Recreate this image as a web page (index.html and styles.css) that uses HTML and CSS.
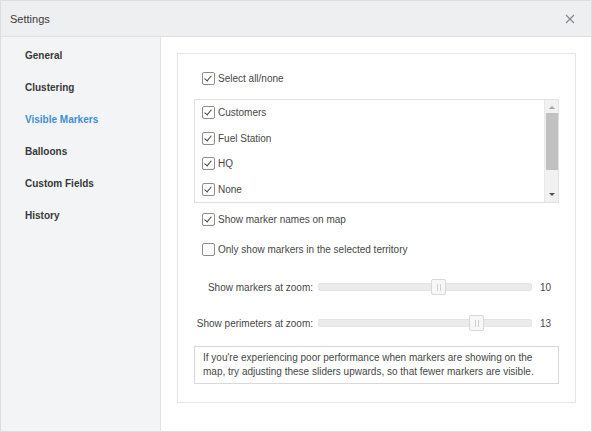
FILE: index.html
```html
<!DOCTYPE html>
<html lang="en">
<head>
    <meta charset="UTF-8">
    <title>Settings</title>
    <link rel="stylesheet" href="styles.css">
</head>
<body>
    <div class="dialog">
        <div class="dialog-header">
            <span class="dialog-title">Settings</span>
            <button class="close-btn" aria-label="Close">
                <svg width="10" height="10" viewBox="0 0 10 10"><path d="M1 1 L9 9 M9 1 L1 9" stroke="#80858f" stroke-width="1.1" fill="none"/></svg>
            </button>
        </div>
        <div class="dialog-body">
            <ul class="sidebar">
                <li>General</li>
                <li>Clustering</li>
                <li class="active">Visible Markers</li>
                <li>Balloons</li>
                <li>Custom Fields</li>
                <li>History</li>
            </ul>
            <div class="content">
                <div class="panel">
                    <label class="check-row"><span class="checkbox checked"></span>Select all/none</label>

                    <div class="marker-list">
                        <div class="marker-items">
                            <label class="check-row item"><span class="checkbox checked"></span>Customers</label>
                            <label class="check-row item"><span class="checkbox checked"></span>Fuel Station</label>
                            <label class="check-row item"><span class="checkbox checked"></span>HQ</label>
                            <label class="check-row item"><span class="checkbox checked"></span>None</label>
                        </div>
                        <div class="scrollbar">
                            <span class="arrow up"></span>
                            <span class="thumb"></span>
                            <span class="arrow down"></span>
                        </div>
                    </div>

                    <label class="check-row option"><span class="checkbox checked"></span>Show marker names on map</label>
                    <label class="check-row option"><span class="checkbox"></span>Only show markers in the selected territory</label>

                    <div class="slider-row first">
                        <span class="slider-label">Show markers at zoom:</span>
                        <div class="slider-track"><span class="slider-thumb" style="left: 112px"></span></div>
                        <span class="slider-value">10</span>
                    </div>
                    <div class="slider-row">
                        <span class="slider-label">Show perimeters at zoom:</span>
                        <div class="slider-track"><span class="slider-thumb" style="left: 150px"></span></div>
                        <span class="slider-value">13</span>
                    </div>

                    <div class="info-box">
                        If you're experiencing poor performance when markers are showing on the map, try adjusting these sliders upwards, so that fewer markers are visible.
                    </div>
                </div>
            </div>
        </div>
    </div>
</body>
</html>
```

FILE: styles.css
```css
* {
    margin: 0;
    padding: 0;
    box-sizing: border-box;
    font-family: 'Liberation Sans', Arial, sans-serif;
}

body {
    background: #ffffff;
}

.dialog {
    width: 592px;
    height: 432px;
    border: 1px solid #dcdde0;
    display: flex;
    flex-direction: column;
    background: white;
}

.dialog-header {
    height: 36px;
    flex-shrink: 0;
    background: #eeeff1;
    border-bottom: 1px solid #dfe0e3;
    display: flex;
    align-items: center;
    justify-content: space-between;
    padding: 0 16px 0 9px;
}

.dialog-title {
    font-size: 11px;
    color: #3a3a3a;
}

.close-btn {
    background: none;
    border: none;
    width: 10px;
    height: 10px;
    display: flex;
    cursor: pointer;
}

.dialog-body {
    flex: 1;
    display: flex;
}

.sidebar {
    width: 160px;
    list-style: none;
    background: #f3f4f6;
    border-right: 1px solid #e2e3e6;
    padding-top: 3px;
}

.sidebar li {
    height: 32px;
    line-height: 32px;
    padding-left: 24px;
    font-size: 10px;
    font-weight: bold;
    color: #383838;
}

.sidebar li.active {
    color: #3d8fd4;
}

.content {
    flex: 1;
    padding: 16px 15px 0 16px;
}

.panel {
    border: 1px solid #e4e4e6;
    padding: 14px 16px 18px 16px;
}

.check-row {
    display: flex;
    align-items: center;
    height: 20px;
    padding-left: 8px;
    font-size: 10px;
    color: #474747;
}

.checkbox {
    width: 13px;
    height: 13px;
    border: 1px solid #8e8e8e;
    border-radius: 2px;
    background: white;
    margin-right: 3px;
    flex-shrink: 0;
    position: relative;
}

.checkbox.checked::after {
    content: '';
    position: absolute;
    left: 3px;
    top: 1px;
    width: 3px;
    height: 6px;
    border-right: 1px solid #444;
    border-bottom: 1px solid #444;
    transform: rotate(40deg);
    transform-origin: center;
}

.marker-list {
    margin-top: 11px;
    height: 104px;
    border: 1px solid #e2e2e4;
    display: flex;
}

.marker-items {
    flex: 1;
}

.marker-items .item {
    height: 25.5px;
    padding-left: 7px;
}

.scrollbar {
    width: 14px;
    background: #f1f1f1;
    border-left: 1px solid #e8e8e8;
    display: flex;
    flex-direction: column;
    align-items: center;
}

.arrow {
    width: 0;
    height: 0;
    border-left: 3px solid transparent;
    border-right: 3px solid transparent;
}

.arrow.up {
    border-bottom: 3px solid #a3a3a3;
    margin-top: 6px;
}

.arrow.down {
    border-top: 3px solid #505050;
    margin-top: auto;
    margin-bottom: 6px;
}

.thumb {
    width: 12px;
    height: 57px;
    background: #c1c1c1;
    margin-top: 4px;
}

.option {
    margin-top: 6px;
}

.option + .option {
    margin-top: 10px;
}

.slider-row {
    display: flex;
    align-items: center;
    height: 20px;
    margin-top: 16px;
    font-size: 10px;
    color: #474747;
}

.slider-row.first {
    margin-top: 18px;
}

.slider-label {
    width: 119px;
    text-align: right;
    margin-right: 5px;
}

.slider-track {
    width: 214px;
    height: 8px;
    background: #ebebeb;
    border: 1px solid #e4e4e4;
    border-radius: 2px;
    position: relative;
}

.slider-thumb {
    position: absolute;
    top: -5px;
    width: 15px;
    height: 16px;
    background: #f7f7f7;
    border: 1px solid #d8d8d8;
    border-radius: 2px;
}

.slider-thumb::after {
    content: '';
    position: absolute;
    left: 5px;
    top: 4px;
    width: 1px;
    height: 7px;
    border-left: 1px solid #cfcfcf;
    border-right: 1px solid #cfcfcf;
    padding-right: 1px;
}

.slider-value {
    margin-left: 8px;
}

.info-box {
    margin-top: 13px;
    border: 1px solid #d8d8dc;
    padding: 4px 8px;
    font-size: 10px;
    line-height: 14px;
    color: #474747;
}
```
